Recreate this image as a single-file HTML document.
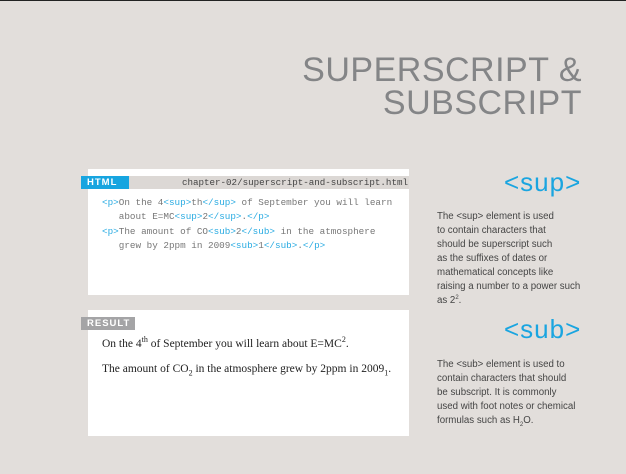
<!DOCTYPE html>
<html><head><meta charset="utf-8"><style>
body{margin:0;width:626px;height:474px;background:#e2dedb;position:relative;overflow:hidden;font-family:"Liberation Sans",sans-serif}
.top{position:absolute;left:0;top:0;width:626px;height:1px;background:#222}
.t{position:absolute;color:#848587;font-size:34px;letter-spacing:0.5px;line-height:32px;right:44px;text-align:right;white-space:nowrap}
.box{position:absolute;left:88px;width:321px;background:#fff}
.hb{position:absolute;left:81px;top:176px;width:328px;height:13px;background:#dcd8d5}
.lbl{position:absolute;color:#fff;font-weight:bold;font-size:9.5px;letter-spacing:1px;line-height:13px;padding-left:6px}
.fn{position:absolute;right:218px;top:176px;font-family:"Liberation Mono",monospace;font-size:9.2px;line-height:13px;color:#444}
.code{position:absolute;left:102px;top:196px;font-family:"Liberation Mono",monospace;font-size:9.3px;line-height:14.4px;color:#777;white-space:pre}
.c{color:#29abe2}
.res{position:absolute;left:102px;top:332px;font-family:"Liberation Serif",serif;font-size:11.5px;color:#222;line-height:25px}
.res sup,.res sub{font-size:8px;line-height:0}
.h{position:absolute;color:#1aa5e0;font-size:26px;letter-spacing:1px}
.p{position:absolute;left:437px;font-size:9.7px;line-height:14px;color:#444;width:170px;white-space:nowrap}
</style></head><body>
<div class="top"></div>
<div class="t" style="top:54px">SUPERSCRIPT &amp;</div>
<div class="t" style="top:87px">SUBSCRIPT</div>

<div class="box" style="top:169px;height:126px"></div>
<div class="hb"></div>
<div class="lbl" style="left:81px;top:176px;width:42px;background:#17a5e0">HTML</div>
<div class="fn">chapter-02/superscript-and-subscript.html</div>
<div class="code"><span class="c">&lt;p&gt;</span>On the 4<span class="c">&lt;sup&gt;</span>th<span class="c">&lt;/sup&gt;</span> of September you will learn
   about E=MC<span class="c">&lt;sup&gt;</span>2<span class="c">&lt;/sup&gt;</span>.<span class="c">&lt;/p&gt;</span>
<span class="c">&lt;p&gt;</span>The amount of CO<span class="c">&lt;sub&gt;</span>2<span class="c">&lt;/sub&gt;</span> in the atmosphere
   grew by 2ppm in 2009<span class="c">&lt;sub&gt;</span>1<span class="c">&lt;/sub&gt;</span>.<span class="c">&lt;/p&gt;</span></div>

<div class="box" style="top:310px;height:126px"></div>
<div class="lbl" style="left:81px;top:317px;width:48px;background:#a4a4a6">RESULT</div>
<div class="res">On the 4<sup>th</sup> of September you will learn about E=MC<sup>2</sup>.<br>The amount of CO<sub>2</sub> in the atmosphere grew by 2ppm in 2009<sub>1</sub>.</div>

<div class="h" style="left:504px;top:167px">&lt;sup&gt;</div>
<div class="p" style="top:210px">The &lt;sup&gt; element is used<br>to contain characters that<br>should be superscript such<br>as the suffixes of dates or<br>mathematical concepts like<br>raising a number to a power such<br>as 2<sup style="font-size:6px;line-height:0">2</sup>.</div>
<div class="h" style="left:504px;top:314px">&lt;sub&gt;</div>
<div class="p" style="top:358px">The &lt;sub&gt; element is used to<br>contain characters that should<br>be subscript. It is commonly<br>used with foot notes or chemical<br>formulas such as H<sub style="font-size:6px;line-height:0">2</sub>O.</div>
</body></html>
